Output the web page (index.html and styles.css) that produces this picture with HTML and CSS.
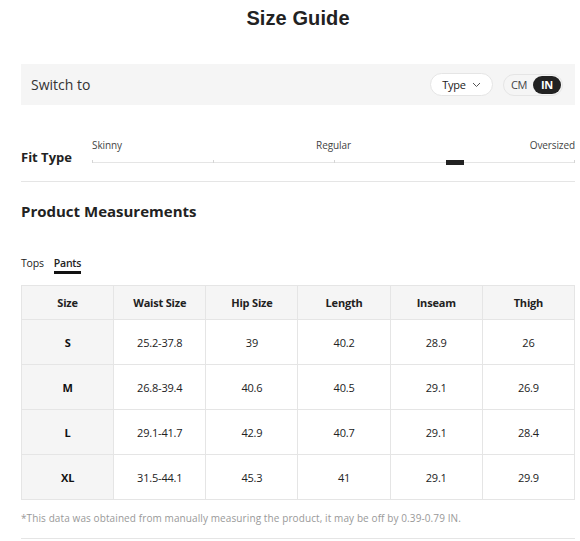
FILE: index.html
```html
<!DOCTYPE html>
<html>
<head>
<meta charset="utf-8">
<link rel="stylesheet" href="styles.css">
</head>
<body>
<div class="page">
  <h1 class="title">Size Guide</h1>
  <div class="switch-bar">
    <span class="switch-label">Switch to</span>
    <div class="switch-controls">
      <div class="type-pill">Type
        <svg class="chev" width="9" height="6" viewBox="0 0 9 6"><path d="M1 1l3.5 3.5L8 1" fill="none" stroke="#555" stroke-width="1"/></svg>
      </div>
      <div class="unit-toggle">
        <span class="unit">CM</span>
        <span class="unit active">IN</span>
      </div>
    </div>
  </div>

  <div class="fit">
    <div class="fit-label">Fit Type</div>
    <div class="fit-scale">
      <div class="fit-names">
        <span class="fn-left">Skinny</span>
        <span class="fn-mid">Regular</span>
        <span class="fn-right">Oversized</span>
      </div>
      <div class="track">
        <span class="tick t0"></span>
        <span class="tick t1"></span>
        <span class="tick t2"></span>
        <span class="tick t3"></span>
        <span class="tick t4"></span>
        <span class="marker"></span>
      </div>
    </div>
  </div>

  <h2 class="section-title">Product Measurements</h2>
  <div class="tabs">
    <span class="tab">Tops</span>
    <span class="tab active">Pants</span>
  </div>

  <table class="sizes">
    <thead>
      <tr><th>Size</th><th>Waist Size</th><th>Hip Size</th><th>Length</th><th>Inseam</th><th>Thigh</th></tr>
    </thead>
    <tbody>
      <tr><th>S</th><td>25.2-37.8</td><td>39</td><td>40.2</td><td>28.9</td><td>26</td></tr>
      <tr><th>M</th><td>26.8-39.4</td><td>40.6</td><td>40.5</td><td>29.1</td><td>26.9</td></tr>
      <tr><th>L</th><td>29.1-41.7</td><td>42.9</td><td>40.7</td><td>29.1</td><td>28.4</td></tr>
      <tr><th>XL</th><td>31.5-44.1</td><td>45.3</td><td>41</td><td>29.1</td><td>29.9</td></tr>
    </tbody>
  </table>
  <p class="note">*This data was obtained from manually measuring the product, it may be off by 0.39-0.79 IN.</p>
  <div class="bottom-rule"></div>
</div>
</body>
</html>
```

FILE: styles.css
```css
* { box-sizing: border-box; }
html, body { margin: 0; padding: 0; background: #fff; }
body {
  font-family: "Open Sans", "Noto Sans", sans-serif;
  color: #222;
}
.page {
  width: 580px;
  padding: 0 5px 0 21px;
}
.title {
  margin: 0;
  padding-top: 6px;
  height: 64px;
  text-align: center;
  font-family: "Liberation Sans", Arial, sans-serif;
  font-size: 20px;
  font-weight: 700;
  line-height: 24px;
  color: #222;
  letter-spacing: 0.1px;
}
.switch-bar {
  height: 41px;
  background: #f5f5f5;
  display: flex;
  align-items: center;
  justify-content: space-between;
  padding: 0 12px 0 10px;
}
.switch-label {
  font-size: 14px;
  color: #333;
}
.switch-controls {
  display: flex;
  align-items: center;
  gap: 10px;
}
.type-pill {
  height: 23px;
  width: 63px;
  border: 1px solid #e5e5e5;
  border-radius: 12px;
  background: #fff;
  display: flex;
  align-items: center;
  justify-content: center;
  gap: 6px;
  font-size: 11px;
  color: #222;
  letter-spacing: -0.2px;
}
.chev { display: block; }
.unit-toggle {
  height: 22px;
  width: 60px;
  border: 1px solid #e5e5e5;
  border-radius: 11px;
  display: flex;
  align-items: center;
  padding: 1px;
  background: #f5f5f5;
}
.unit {
  flex: 1;
  text-align: center;
  font-size: 11px;
  color: #444;
  letter-spacing: -0.3px;
  line-height: 18px;
}
.unit.active {
  background: #222;
  color: #fff;
  border-radius: 10px;
  font-weight: 700;
}
.fit {
  display: flex;
  align-items: flex-start;
  padding-top: 32px;
  height: 77px;
  border-bottom: 1px solid #e5e5e5;
}
.fit-label {
  width: 71px;
  padding-top: 11px;
  font-size: 13px;
  font-weight: 700;
  color: #222;
}
.fit-scale {
  flex: 1;
}
.fit-names {
  display: grid;
  grid-template-columns: 1fr auto 1fr;
  font-size: 10px;
  color: #444;
  line-height: 16px;
  letter-spacing: -0.1px;
}
.fn-left { text-align: left; }
.fn-mid { text-align: center; }
.fn-right { text-align: right; }
.track {
  position: relative;
  margin-top: 9px;
  height: 1px;
  background: #e5e5e5;
}
.tick {
  position: absolute;
  top: -2px;
  width: 1px;
  height: 3px;
  background: #d5d5d5;
}
.t0 { left: 0; }
.t1 { left: 25%; }
.t2 { left: 50%; }
.t3 { left: 75%; }
.t4 { right: 0; }
.marker {
  position: absolute;
  top: -2px;
  left: 354px;
  width: 18px;
  height: 5px;
  background: #222;
}
.section-title {
  margin: 0;
  padding-top: 19px;
  font-size: 15px;
  font-weight: 700;
  line-height: 20px;
  color: #222;
}
.tabs {
  display: flex;
  gap: 10px;
  margin-top: 34px;
  height: 24px;
  font-size: 10.5px;
  letter-spacing: -0.2px;
}
.tab {
  color: #222;
  line-height: 16px;
  height: 17px;
}
.tab.active {
  font-weight: 600;
  color: #222;
  border-bottom: 3px solid #111;
  height: 19px;
}
.sizes {
  margin-top: 6px;
  width: 554px;
  border-collapse: collapse;
  table-layout: fixed;
  font-size: 11px;
}
.sizes th, .sizes td {
  border: 1px solid #e5e5e5;
  text-align: center;
  padding: 0;
  letter-spacing: -0.2px;
}
.sizes thead th {
  height: 34px;
  background: #f5f5f5;
  font-weight: 700;
  color: #222;
}
.sizes tbody th {
  background: #f5f5f5;
  font-weight: 700;
  color: #111;
}
.sizes tbody tr { height: 45px; }
.sizes td { color: #222; }
.note {
  margin: 0;
  padding-top: 10px;
  font-size: 10px;
  color: #999;
  line-height: 16px;
  height: 38px;
  letter-spacing: 0.1px;
}
.bottom-rule {
  height: 1px;
  background: #e5e5e5;
}
```
